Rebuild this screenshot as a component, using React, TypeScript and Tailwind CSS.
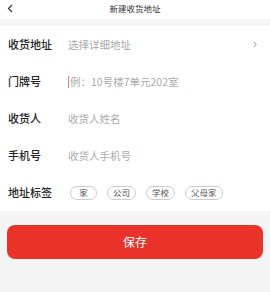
import React from "react";

const font = { fontFamily: '"Noto Sans CJK SC", "Noto Sans", sans-serif' };

function Row({ label, children }: { label: string; children: React.ReactNode }) {
  return (
    <div className="flex h-[37px] items-center pl-2 pr-3">
      <div className="w-[60px] shrink-0 text-[11px] font-medium text-[#222]">{label}</div>
      <div className="flex flex-1 items-center">{children}</div>
    </div>
  );
}

const tags = ["家", "公司", "学校", "父母家"];

export default function App() {
  return (
    <div className="h-[292px] w-[270px] overflow-hidden bg-[#f4f4f4]" style={font}>
      {/* header */}
      <div className="relative flex h-[19px] items-center justify-center bg-white">
        <svg className="absolute left-[7px] top-[4px]" width="6" height="9" viewBox="0 0 6 9">
          <path d="M5 1 L1.5 4.5 L5 8" fill="none" stroke="#333" strokeWidth="1.2" />
        </svg>
        <span className="-mt-[2px] text-[8.5px] text-[#333]">新建收货地址</span>
      </div>

      <div className="mt-[7px] bg-white">
        <Row label="收货地址">
          <span className="flex-1 text-[10.5px] text-[#aaa]">选择详细地址</span>
          <svg width="4" height="7" viewBox="0 0 4 7" className="mr-[1px]">
            <path d="M0.8 0.8 L3.2 3.5 L0.8 6.2" fill="none" stroke="#888" strokeWidth="0.9" />
          </svg>
        </Row>
        <Row label="门牌号">
          <span className="mr-[1px] h-[12px] w-[1px] bg-[#e08080]" />
          <span className="text-[10.5px] text-[#aaa]">例：10号楼7单元202室</span>
        </Row>
        <Row label="收货人">
          <span className="text-[10.5px] text-[#aaa]">收货人姓名</span>
        </Row>
        <Row label="手机号">
          <span className="text-[10.5px] text-[#aaa]">收货人手机号</span>
        </Row>
        <Row label="地址标签">
          <div className="ml-[2px] flex gap-[10px]">
            {tags.map((t) => (
              <span
                key={t}
                className="flex h-[14px] min-w-[27px] items-center justify-center rounded-full border border-[#ccc] px-[5px] text-[8.5px] leading-none text-[#555]"
              >
                {t}
              </span>
            ))}
          </div>
        </Row>
      </div>

      <div className="px-[7px] pt-[14px]">
        <button className="flex h-[34px] w-full items-center justify-center rounded-[8px] bg-[#e8322a] text-[12px] text-white">
          保存
        </button>
      </div>
    </div>
  );
}
